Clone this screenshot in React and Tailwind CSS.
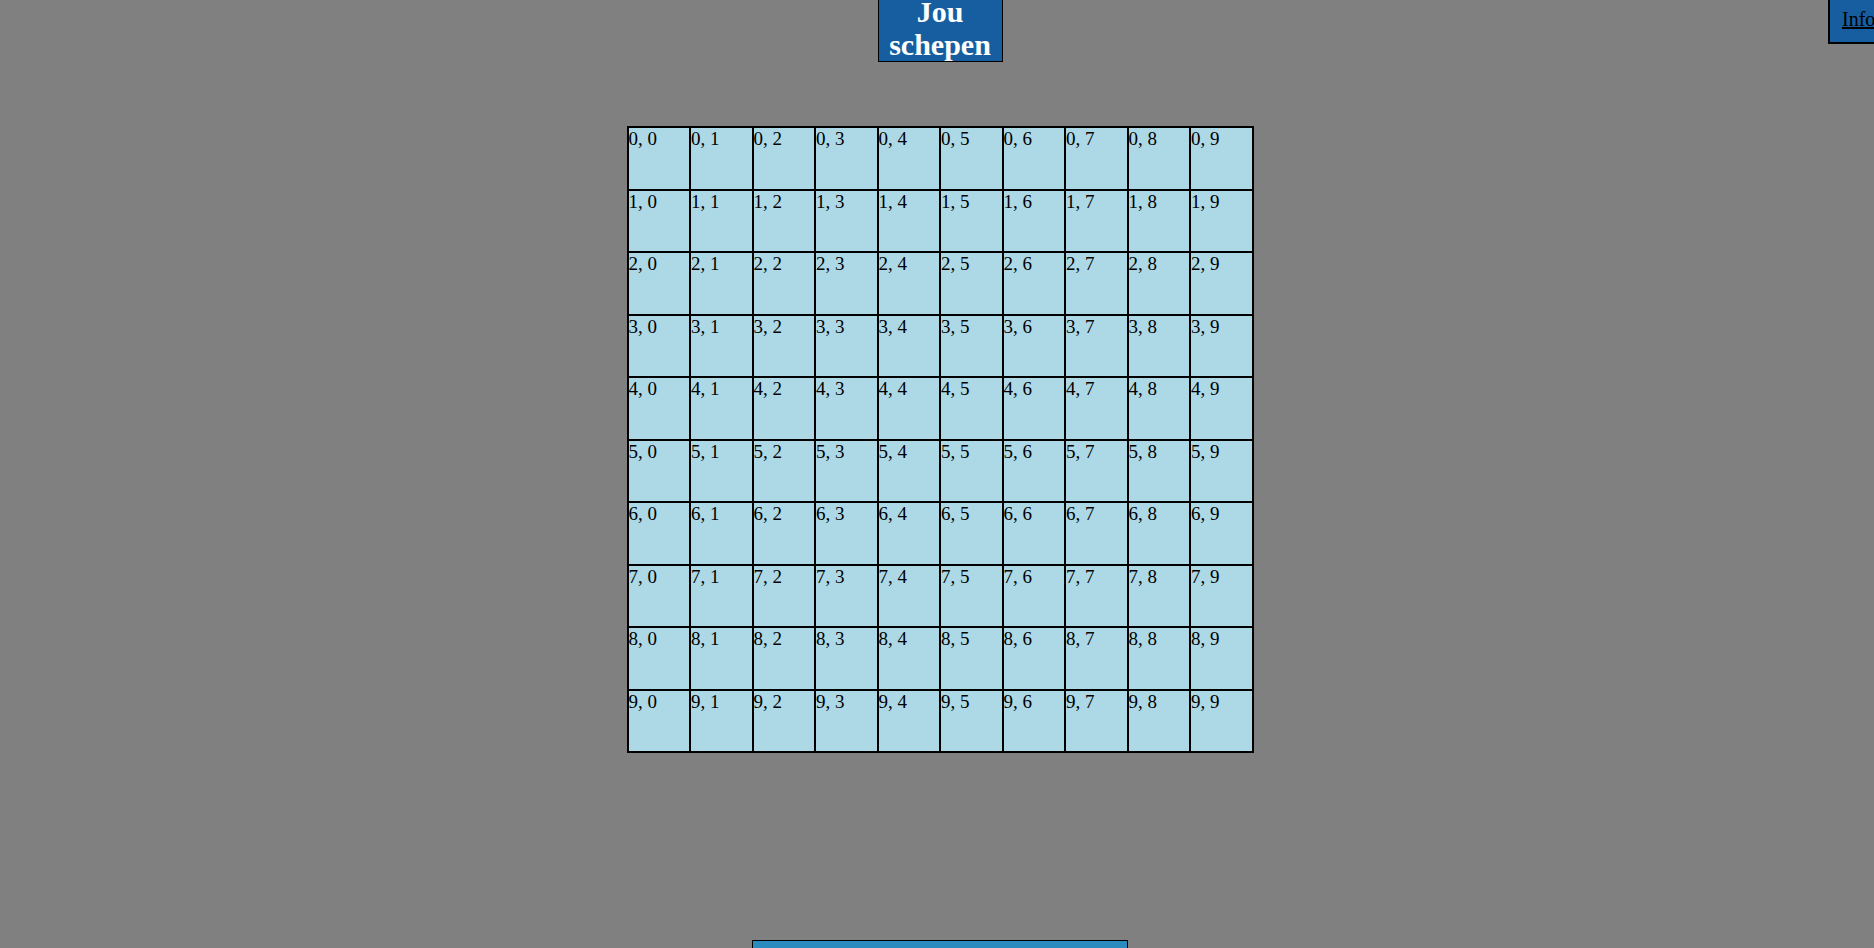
const rows = [0, 1, 2, 3, 4, 5, 6, 7, 8, 9];
const cols = [0, 1, 2, 3, 4, 5, 6, 7, 8, 9];

function Board() {
  return (
    <div className="grid grid-cols-10 w-[627px] border border-black bg-[#add8e6]">
      {rows.map((r) =>
        cols.map((c) => (
          <div
            key={`${r}-${c}`}
            className="h-[62.5px] border border-black bg-[#add8e6] text-[19px] text-black leading-[22px]"
          >
            {r}, {c}
          </div>
        ))
      )}
    </div>
  );
}

export default function App() {
  return (
    <div
      className="relative h-[948px] w-full overflow-hidden bg-[#808080]"
      style={{ fontFamily: '"Liberation Serif", "Times New Roman", serif' }}
    >
      {/* info link, cut off at the right edge */}
      <div className="absolute left-[1828px] top-0 border-2 border-t-0 border-black bg-[#165e9f] pl-[12px] pr-[12px] pt-[8px] pb-[11px] text-[20px] leading-[23px]">
        <a href="#" className="text-black underline">
          Info
        </a>
      </div>

      <div className="flex flex-col items-center pl-[6px]">
        {/* title */}
        <div className="-mt-[6px] flex h-[68px] w-[125px] flex-col items-center border border-black bg-[#165e9f] text-center">
          <h1 className="text-[30px] font-bold leading-[33px] text-white">
            Jou schepen
          </h1>
        </div>

        <div className="mt-[64px]">
          <Board />
        </div>

        {/* bottom panel, mostly below the fold */}
        <div className="mt-[187px] h-[60px] w-[376px] border border-black bg-[#2a8bbf]" />
      </div>
    </div>
  );
}
